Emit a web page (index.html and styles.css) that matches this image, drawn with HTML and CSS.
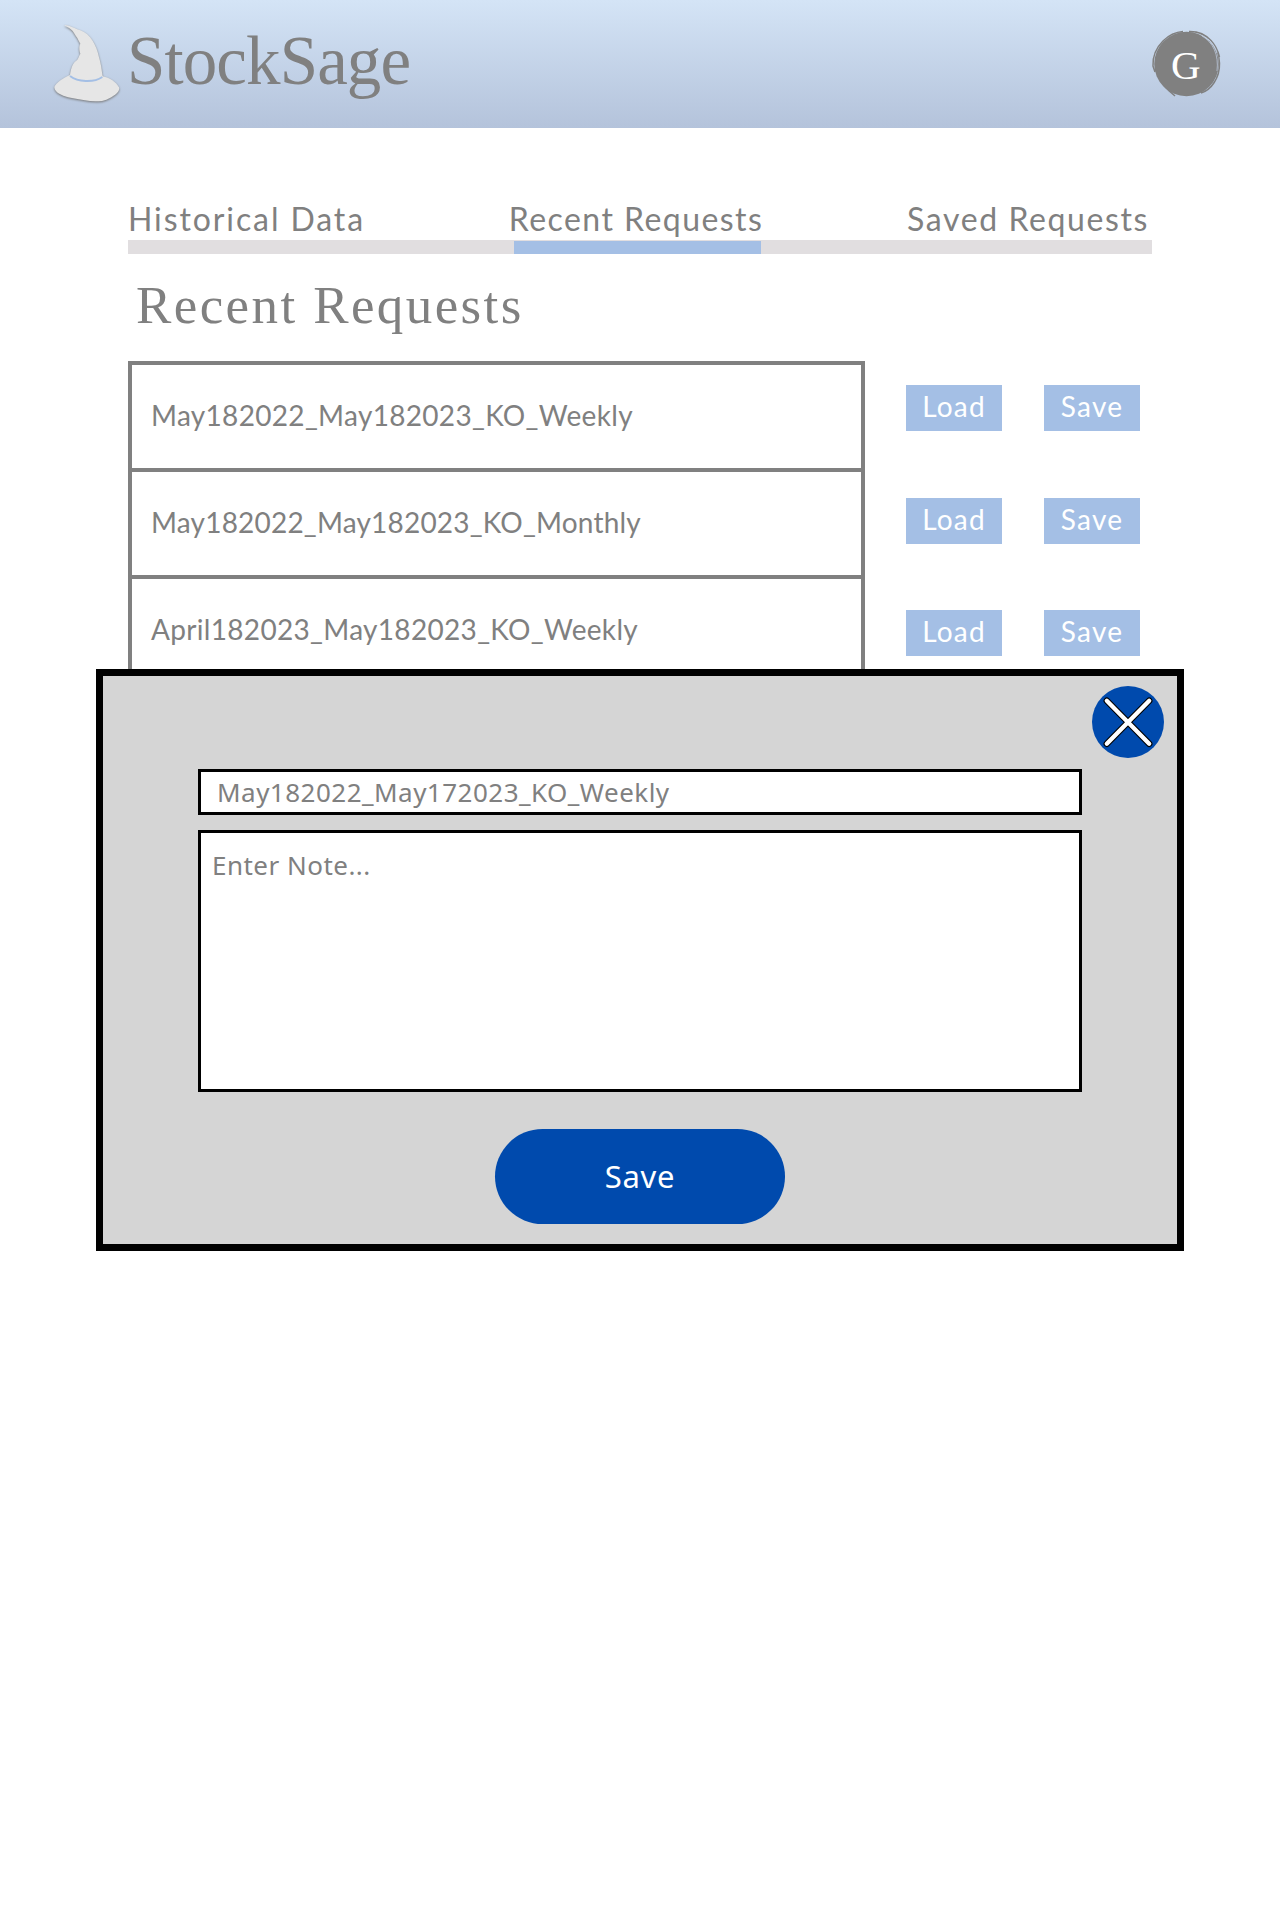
FILE: index.html
```html
<!DOCTYPE html>
<html lang="en">
<head>
<meta charset="utf-8">
<title>StockSage</title>
<link rel="stylesheet" href="styles.css">
</head>
<body>
<header class="header">
  <div class="brand">
    <svg class="hat" width="74" height="88" viewBox="0 0 222 264">
      <path d="M34 29 C42 24 66 38 82 43 C112 53 132 91 138 124 C146 153 146 164 149 181 C170 185 190 199 198 214 C203 225 184 242 160 251 L147 255 C128 256 111 256 96 253 C71 247 49 246 31 239 C9 230 5 222 4 213 C8 202 34 183 51 177 C54 158 58 142 70 134 C76 130 76 122 82 113 C79 106 77 92 82 83 C75 73 75 67 69 61 C61 44 52 35 34 29 Z" fill="#e6e6e6"/>
      <path d="M51 180 C74 198 122 201 148 183" fill="none" stroke="#a4bfe5" stroke-width="6"/>
    </svg>
    <span class="brand-name">StockSage</span>
  </div>
  <div class="avatar">
    <svg class="avatar-ink" width="72" height="72" viewBox="0 0 72 72">
      <circle cx="35.500" cy="36" r="32.300" fill="#808080"/>
      <path d="M32 3.500 C24 4 18 7 12 13 C4 21 1.500 29 2 38 L4 44 M38 3.500 C57 3 68 18 68.500 35 C69 50 60 62 50 65 M44 4 C56 6 65 15 68.500 29 M17 62 L24 68 L14 59" fill="none" stroke="#808080" stroke-width="1.500"/>
      <path d="M51 8 C62 14 68 27 66 43 M57 11 C62 15 65 21 66 25" fill="none" stroke="#c4d2e8" stroke-width=".7"/>
    </svg>
    <span class="avatar-letter">G</span>
  </div>
</header>
<main class="main">
  <nav class="tabs">
    <a class="tab tab-history">Historical Data</a>
    <a class="tab tab-recent">Recent Requests</a>
    <a class="tab tab-saved">Saved Requests</a>
  </nav>
  <div class="track"><div class="track-active"></div></div>
  <h1 class="title">Recent Requests</h1>
  <div class="requests">
    <div class="list">
      <div class="item">May182022_May182023_KO_Weekly</div>
      <div class="item item-monthly">May182022_May182023_KO_Monthly</div>
      <div class="item">April182023_May182023_KO_Weekly</div>
    </div>
    <div class="actions">
      <button class="action">Load</button><button class="action">Save</button>
      <button class="action">Load</button><button class="action">Save</button>
      <button class="action">Load</button><button class="action">Save</button>
    </div>
  </div>
</main>
<section class="modal">
  <button class="close" aria-label="Close">
    <svg width="72" height="72" viewBox="0 0 72 72">
      <circle cx="36" cy="36" r="36" fill="#004aad"/>
      <path class="cross-edge" d="M14.800 14.700 L57.200 57.800 M57.200 14.700 L14.800 57.800"/>
      <path class="cross" d="M14.800 14.700 L57.200 57.800 M57.200 14.700 L14.800 57.800"/>
    </svg>
  </button>
  <div class="field">May182022_May172023_KO_Weekly</div>
  <div class="note">Enter Note...</div>
  <button class="submit">Save</button>
</section>
</body>
</html>
```
FILE: styles.css
```css
* { box-sizing: border-box; }
body { margin: 0; min-height: 1920px; background: #fff; color: #808080; font-family: Lato, sans-serif; position: relative; }
button { border: 0; padding: 0; font-family: inherit; }
.header { height: 128px; padding: 16px 57px 0 53px; display: flex; justify-content: space-between; background: linear-gradient(#d4e4f6, #b4c3db); }
.brand { display: flex; }
.hat { filter: drop-shadow(0 1px 1px #777); }
.brand-name { font: 69px/76px "Liberation Serif", serif; letter-spacing: -.9px; padding-top: 7px; }
.avatar { position: relative; width: 72px; height: 72px; margin-top: 12px; }
.avatar-ink { display: block; }
.avatar-letter { position: absolute; left: 20px; top: 14px; font: 41px/46px "Liberation Serif", serif; color: #fff; }
.main { width: 1024px; margin: 0 auto; }
.tabs { height: 112px; padding: 71px 3px 0 0; display: flex; justify-content: space-between; font-size: 32px; line-height: 40px; white-space: nowrap; }
.tab-history { letter-spacing: 1.900px; }
.tab-recent { letter-spacing: 1.450px; }
.tab-saved { letter-spacing: 1.600px; }
.track { height: 14px; padding-top: 1px; background: #e1dee0; }
.track-active { width: 247px; height: 13px; margin-left: 386px; background: #a4bfe5; }
.title { margin: 0; height: 107px; padding: 21px 0 0 8px; font: 400 53px/60px "Liberation Serif", serif; letter-spacing: 2.400px; }
.requests { display: flex; gap: 41px; }
.list { width: 737px; border: 4px solid #808080; }
.item { height: 107px; padding: 32px 0 0 19px; border-bottom: 4px solid #808080; font-size: 28px; line-height: 36px; letter-spacing: .320px; }
.item-monthly { letter-spacing: .200px; }
.actions { padding-top: 24px; display: grid; grid-template-columns: 96px 96px; grid-auto-rows: 46px; gap: 66.500px 42px; }
.action { background: #a4bfe5; color: #fff; font-size: 28px; line-height: 36px; padding-bottom: 4px; letter-spacing: 1.200px; }
.modal { position: absolute; left: 96px; top: 669px; width: 1088px; height: 582px; border: 7px solid #000; background: #d5d5d5; padding: 93px 95px 0; display: flex; flex-direction: column; font-family: "Noto Sans", sans-serif; }
.close { position: absolute; right: 13px; top: 10px; width: 72px; height: 72px; background: none; }
.close svg { display: block; }
.cross, .cross-edge { fill: none; stroke-linecap: round; }
.cross { stroke: #fff; stroke-width: 4.300px; }
.cross-edge { stroke: #000; stroke-width: 6.500px; }
.field, .note { border: 3px solid #000; background: #fff; font-size: 26px; line-height: 36px; white-space: nowrap; letter-spacing: .480px; }
.field { height: 46px; padding: 2px 0 0 16px; }
.note { height: 262px; margin-top: 15px; padding: 14px 0 0 11px; }
.submit { align-self: center; width: 290px; height: 95px; margin-top: 37px; padding: 0 0 2px; border-radius: 48px; background: #004aad; color: #fff; font-size: 31px; letter-spacing: .700px; }
```
